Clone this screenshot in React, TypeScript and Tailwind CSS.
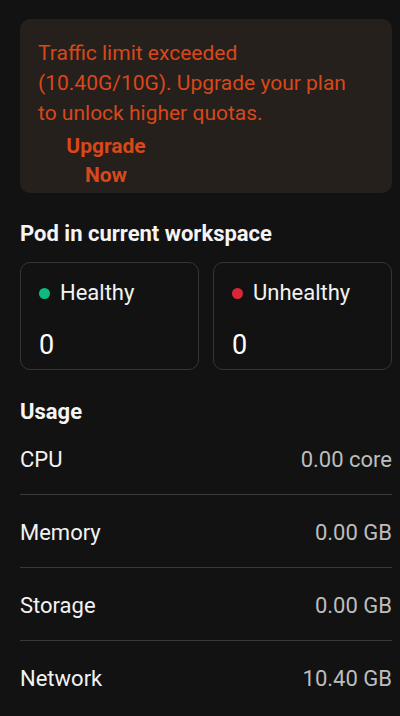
import React from 'react';

const usage = [
  { label: 'CPU', value: '0.00 core' },
  { label: 'Memory', value: '0.00 GB' },
  { label: 'Storage', value: '0.00 GB' },
  { label: 'Network', value: '10.40 GB' },
];

function PodCard({ label, dot }: { label: string; dot: string }) {
  return (
    <div className="flex-1 h-[108px] rounded-[10px] border border-[#353535] px-[18px] pt-[16px]">
      <div className="flex items-center gap-[10px] text-[22px] leading-[28px] text-[#f2f2f2]">
        <span className={`w-[11px] h-[11px] rounded-full ${dot}`} />
        <span>{label}</span>
      </div>
      <div className="mt-[23px] text-[27px] leading-[30px] text-white">0</div>
    </div>
  );
}

export default function App() {
  return (
    <div
      className="w-[400px] h-[716px] bg-[#121212] pl-[20px] pr-[8px] pt-[19px] overflow-hidden"
      style={{ fontFamily: 'Roboto, "Noto Sans", sans-serif' }}
    >
      <div className="h-[174px] rounded-[10px] bg-[#25201b] pl-[18px] pr-[24px] pt-[19px]">
        <p className="text-[21px] leading-[30px] text-[#d9471a]">
          Traffic limit exceeded (10.40G/10G). Upgrade your plan to unlock higher quotas.
        </p>
        <button className="block mt-[4px] ml-[18px] w-[100px] text-center text-[21px] leading-[29px] font-bold text-[#d9471a]">
          Upgrade Now
        </button>
      </div>

      <h2 className="mt-[28px] text-[22px] leading-[26px] font-bold text-[#f5f5f5]">
        Pod in current workspace
      </h2>
      <div className="mt-[15px] flex gap-[14px]">
        <PodCard label="Healthy" dot="bg-[#10b981]" />
        <PodCard label="Unhealthy" dot="bg-[#dc2637]" />
      </div>

      <h2 className="mt-[29px] text-[22px] leading-[26px] font-bold text-[#f5f5f5]">Usage</h2>
      <div className="-mt-[3px]">
        {usage.map((u, i) => (
          <div
            key={u.label}
            className={`flex items-center justify-between pt-[25px] pb-[21px] leading-[26px] ${i < usage.length - 1 ? 'border-b border-[#3a3a3a]' : ''}`}
          >
            <span className="text-[22px] text-[#f2f2f2]">{u.label}</span>
            <span className="text-[22px] text-[#bdbdbd]">{u.value}</span>
          </div>
        ))}
      </div>
    </div>
  );
}
